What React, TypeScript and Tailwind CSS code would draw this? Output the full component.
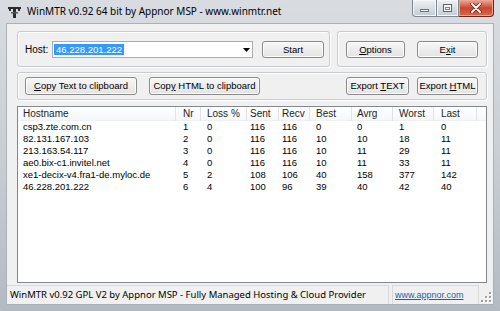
import React from 'react';

const pads = ['pl-[5px]', 'pl-[7px]', 'pl-[6px]', 'pl-[3px]', 'pl-[3px]', 'pl-[6px]', 'pl-[5px]', 'pl-[6px]', 'pl-[7px]'];
const heads = ['Hostname', 'Nr', 'Loss %', 'Sent', 'Recv', 'Best', 'Avrg', 'Worst', 'Last'];
const rows: string[][] = [
  ['csp3.zte.com.cn', '1', '0', '116', '116', '0', '0', '1', '0'],
  ['82.131.167.103', '2', '0', '116', '116', '10', '10', '18', '11'],
  ['213.163.54.117', '3', '0', '116', '116', '10', '11', '29', '11'],
  ['ae0.bix-c1.invitel.net', '4', '0', '116', '116', '10', '11', '33', '11'],
  ['xe1-decix-v4.fra1-de.myloc.de', '5', '2', '108', '106', '40', '158', '377', '142'],
  ['46.228.201.222', '6', '4', '100', '96', '39', '40', '42', '40'],
];

function Btn({ children, className = '' }: { children: React.ReactNode; className?: string }) {
  return (
    <div
      className={`flex items-center justify-center border border-[#8a8a8a] rounded-[3px] bg-gradient-to-b from-[#f7f7f7] to-[#e3e3e3] shadow-[inset_0_0_0_1px_#fbfbfb] text-[9.5px] leading-none text-black ${className}`}
    >
      <span className="whitespace-pre">{children}</span>
    </div>
  );
}

const group = 'border border-[#c6ccd2] rounded-[3px] shadow-[inset_1px_1px_0_#ffffff,1px_1px_0_#ffffff]';

export default function App() {
  return (
    <div
      className="w-[500px] h-[311px] flex flex-col overflow-hidden bg-gradient-to-b from-[#d9dde2] via-[#c8ced4] to-[#b3bac1]"
      style={{ fontFamily: '"Liberation Sans", Arial, sans-serif' }}
    >
      {/* Title bar */}
      <div className="h-[24px] flex items-start shrink-0">
        <svg width="13" height="11" viewBox="0 0 13 11" className="ml-[8px] mt-[7px]">
          <rect x="0" y="0" width="13" height="2" fill="#2b2b2b" />
          <rect x="1" y="2" width="2" height="2" fill="#2b2b2b" />
          <rect x="10" y="2" width="2" height="2" fill="#2b2b2b" />
          <rect x="5" y="2" width="3" height="9" fill="#2b2b2b" />
          <rect x="3" y="5" width="7" height="1.5" fill="#555" />
        </svg>
        <span
          className="ml-[6px] mt-[4px] text-[10px] leading-[14px] text-black"
          style={{ fontFamily: '"Noto Sans", "Open Sans", sans-serif' }}
        >
          WinMTR v0.92 64 bit by Appnor MSP - www.winmtr.net
        </span>
        <div className="ml-auto mr-[6px] flex">
          <div className="w-[25px] h-[17px] rounded-bl-[4px] border border-t-0 border-[#7d868f] bg-gradient-to-b from-[#eef1f4] to-[#c3cbd3] shadow-[inset_0_0_0_1px_#f4f6f8] flex items-center justify-center">
            <div className="w-[9px] h-[3px] mt-[4px] bg-[#f4f6f8] border border-[#6c747c]" />
          </div>
          <div className="w-[22px] h-[17px] border border-t-0 border-l-0 border-[#7d868f] bg-gradient-to-b from-[#eef1f4] to-[#c3cbd3] shadow-[inset_0_0_0_1px_#f4f6f8] flex items-center justify-center">
            <div className="w-[9px] h-[8px] border border-[#5d656d] bg-[#f4f6f8] flex items-center justify-center">
              <div className="w-[5px] h-[3px] mt-[1px] border border-[#7d868f]" />
            </div>
          </div>
          <div className="w-[35px] h-[17px] rounded-br-[4px] border border-t-0 border-l-0 border-[#6e2519] bg-gradient-to-b from-[#e9a898] via-[#c9452e] to-[#d9694f] shadow-[inset_0_0_0_1px_#eba58f] flex items-center justify-center">
            <svg width="12" height="10" viewBox="0 0 12 10">
              <path d="M2 1 L10 9 M10 1 L2 9" stroke="#5a1a10" strokeWidth="3.4" strokeLinecap="round" />
              <path d="M2 1 L10 9 M10 1 L2 9" stroke="#ffffff" strokeWidth="2" strokeLinecap="round" />
            </svg>
          </div>
        </div>
      </div>

      {/* Middle */}
      <div className="flex-1 flex px-[7px] min-h-0">
        <div className="flex-1 bg-[#f0f0f0] flex flex-col shadow-[0_0_0_1px_#a9b1b9]">
          <div className="flex flex-col pt-[7px] pl-[10px] pr-[6px] flex-1 min-h-0">
            {/* Row 1 */}
            <div className="flex gap-[7px] h-[36px] shrink-0">
              <div className={`${group} w-[313px] flex items-start pt-[9px] pl-[7px]`}>
                <span className="w-[27px] text-[10px] leading-[17px] text-black">Host:</span>
                <div className="w-[201px] h-[17px] bg-white border border-[#abadb3] flex items-center pl-[1px] pr-[2px]">
                  <span className="bg-[#3399ff] text-white text-[9.5px] leading-[11px] px-[2px]">46.228.201.222</span>
                  <svg width="7" height="4" viewBox="0 0 7 4" className="ml-auto">
                    <path d="M0 0 H7 L3.5 4 Z" fill="#000" />
                  </svg>
                </div>
                <Btn className="ml-[9px] w-[62px] h-[17px] border-[#4f5f6c] shadow-[inset_0_0_0_1px_#c9dceb]">Start</Btn>
              </div>
              <div className={`${group} flex-1 flex items-start pt-[9px] pl-[8px]`}>
                <Btn className="w-[59px] h-[17px]">
                  <span className="underline">O</span>ptions
                </Btn>
                <Btn className="ml-[12px] w-[61px] h-[17px]">
                  E<span className="underline">x</span>it
                </Btn>
              </div>
            </div>

            {/* Row 2 */}
            <div className={`${group} mt-[5px] h-[28px] shrink-0 flex items-start pt-[4px] pl-[7px] pr-[8px]`}>
              <Btn className="w-[112px] h-[18px]">
                <span className="underline">C</span>opy Text to clipboard
              </Btn>
              <Btn className="ml-[12px] w-[111px] h-[18px]">
                Cop<span className="underline">y</span>{' '}HTML to clipboard
              </Btn>
              <Btn className="ml-auto w-[63px] h-[18px]">
                Export{' '}<span className="underline">T</span>EXT
              </Btn>
              <Btn className="ml-[8px] w-[61px] h-[18px]">
                Export{' '}<span className="underline">H</span>TML
              </Btn>
            </div>

            {/* Table */}
            <div className="mt-[6px] flex-1 min-h-0 border border-[#828790] bg-white flex flex-col">
              <div className="grid grid-cols-[158px_25px_46px_32px_31px_42px_41px_41px_43px_1fr] h-[14px] bg-gradient-to-b from-white to-[#f6f7f9] border-b border-[#eef0f2]">
                {heads.map((h, i) => (
                  <div
                    key={h}
                    className={`${pads[i]} border-r border-[#dfe2e6] text-[10px] leading-[14px] text-[#1e1e1e]`}
                  >
                    {h}
                  </div>
                ))}
                <div />
              </div>
              {rows.map((r, ri) => (
                <div key={ri} className="grid grid-cols-[158px_25px_46px_32px_31px_42px_41px_41px_43px_1fr] h-[12px]">
                  {r.map((c, ci) => (
                    <div key={ci} className={`${pads[ci]} text-[9.5px] leading-[12px] text-black whitespace-nowrap`}>
                      {c}
                    </div>
                  ))}
                  <div />
                </div>
              ))}
            </div>
          </div>

          {/* Status bar */}
          <div className="mt-[2px] h-[19px] shrink-0 flex items-stretch">
            <div
              className="w-[382px] border-t border-r border-[#d9d9d9] pl-[3px] text-[9.5px] leading-[18px] text-black whitespace-nowrap overflow-hidden"
              style={{ fontFamily: '"Noto Sans", "Open Sans", sans-serif' }}
            >
              WinMTR v0.92 GPL V2 by Appnor MSP - Fully Managed Hosting &amp; Cloud Provider
            </div>
            <div className="ml-[3px] w-[87px] border-t border-x border-[#d9d9d9] pl-[2px] flex items-center">
              <span className="text-[9px] leading-none text-[#1a5fb4] underline">www.appnor.com</span>
            </div>
            <div className="flex-1 flex items-end justify-end pr-[1px] pb-[1px]">
              <svg width="11" height="11" viewBox="0 0 11 11">
                {[
                  [8, 0], [8, 4], [4, 4], [8, 8], [4, 8], [0, 8],
                ].map(([x, y], i) => (
                  <g key={i}>
                    <rect x={x + 1} y={y + 1} width="2" height="2" fill="#ffffff" />
                    <rect x={x} y={y} width="2" height="2" fill="#a0a0a0" />
                  </g>
                ))}
              </svg>
            </div>
          </div>
        </div>
      </div>
      <div className="h-[7px] shrink-0" />
    </div>
  );
}
